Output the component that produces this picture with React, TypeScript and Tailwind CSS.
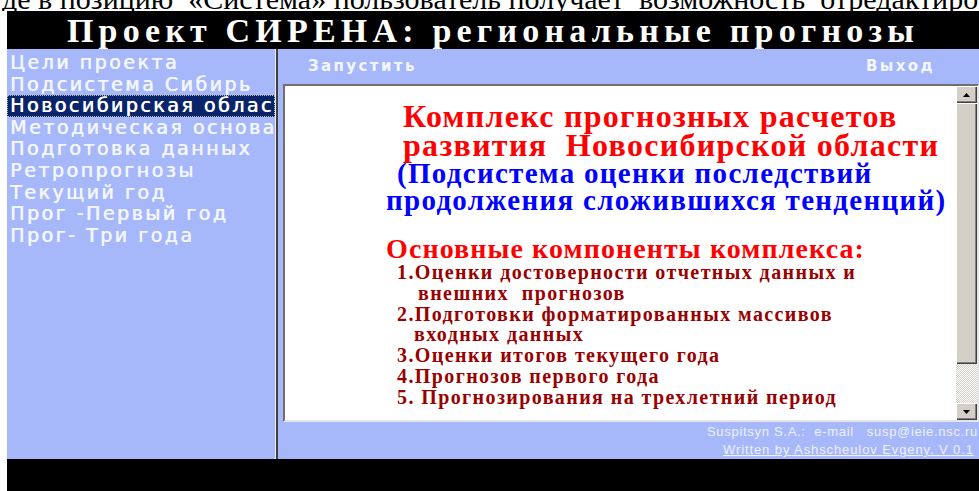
import React from "react";

const serif = "font-['Liberation_Serif','Times_New_Roman',serif]";
const sans = "font-['DejaVu_Sans','Verdana',sans-serif]";

const menuItems = [
  "Цели проекта",
  "Подсистема Сибирь",
  "Новосибирская область",
  "Методическая основа",
  "Подготовка данных",
  "Ретропрогнозы",
  "Текущий год",
  "Прог -Первый год",
  "Прог- Три года",
];

const components = [
  { text: "1.Оценки достоверности отчетных данных и", indent: "ml-[112px]" },
  { text: "внешних  прогнозов", indent: "ml-[133px]" },
  { text: "2.Подготовки форматированных массивов", indent: "ml-[112px]" },
  { text: "входных данных", indent: "ml-[129px]" },
  { text: "3.Оценки итогов текущего года", indent: "ml-[112px]" },
  { text: "4.Прогнозов первого года", indent: "ml-[112px]" },
  { text: "5. Прогнозирования на трехлетний период", indent: "ml-[112px]" },
];

const bevel =
  "bg-[#d4d0c8] shadow-[inset_1px_1px_0_#ffffff,inset_-1px_-1px_0_#404040,inset_-2px_-2px_0_#808080]";

const ScrollButton = ({ up }: { up: boolean }) => (
  <div className={`h-[17px] flex items-center justify-center ${bevel}`}>
    <svg width="7" height="4" viewBox="0 0 7 4">
      {up ? (
        <polygon points="3.5,0 7,4 0,4" fill="#000" />
      ) : (
        <polygon points="0,0 7,0 3.5,4" fill="#000" />
      )}
    </svg>
  </div>
);

const Menu = () => (
  <div className="w-[268px] bg-[#a6b8fa] pt-[3px]">
    {menuItems.map((item, i) => (
      <div
        key={item}
        className={`h-[21.6px] pl-[3px] whitespace-nowrap overflow-hidden text-[19px] leading-[21.6px] tracking-[2.5px] [text-shadow:0.6px_0_0_currentColor] ${sans} ${
          i === 2
            ? "bg-[#0a246a] text-white outline-1 outline-dotted outline-[#c8c0a0] -outline-offset-1"
            : "text-[#f4f6ff]"
        }`}
      >
        {item}
      </div>
    ))}
  </div>
);

const Content = () => (
  <div className={`flex-1 bg-white pt-[16px] overflow-hidden ${serif} font-bold whitespace-pre`}>
    <div className="text-[#ff0000] text-[32px] leading-[29px] tracking-[1.3px]">
      <div className="ml-[118px]">Комплекс прогнозных расчетов</div>
      <div className="ml-[118px]">развития  Новосибирской области</div>
    </div>
    <div className="text-[#0000ff] text-[29px] leading-[27px] tracking-[1.3px]">
      <div className="ml-[112px]">(Подсистема оценки последствий</div>
      <div className="ml-[101px]">продолжения сложившихся тенденций)</div>
    </div>
    <div className="mt-[21px] ml-[101px] text-[#ff0000] text-[28px] leading-[27px] tracking-[1.1px]">
      Основные компоненты комплекса:
    </div>
    <div className="text-[#990000] text-[20px] leading-[20.8px] tracking-[1.4px]">
      {components.map((c) => (
        <div key={c.text} className={c.indent}>
          {c.text}
        </div>
      ))}
    </div>
  </div>
);

const Scrollbar = () => (
  <div className="w-[21px] flex flex-col">
    <ScrollButton up />
    <div className={`h-[261px] ${bevel}`} />
    <div className="flex-1 bg-[repeating-conic-gradient(#d4d0c8_0_25%,#ffffff_0_50%)] bg-[length:2px_2px]" />
    <ScrollButton up={false} />
  </div>
);

export default function App() {
  return (
    <div className="w-[979px] h-[491px] overflow-hidden bg-white">
      <div className="h-[11px] overflow-hidden">
        <p className={`-mt-[16px] ml-[2px] text-[30px] leading-[30px] text-black whitespace-pre ${serif}`}>
          де в позицию  «Система» пользователь получает  возможность  отредактировать
        </p>
      </div>
      <div className="ml-[7px] flex flex-col">
        <div
          className={`h-[38px] bg-black text-white text-center text-[34px] leading-[40px] font-bold tracking-[5.2px] whitespace-nowrap overflow-hidden ${serif}`}
        >
          Проект СИРЕНА: региональные прогнозы
        </div>
        <div className="h-[410px] flex">
          <Menu />
          <div className="w-[3px] border-l border-[#e8ecff] bg-[#404040]" />
          <div className="flex-1 bg-[#a6b8fa] flex flex-col">
            <div
              className={`h-[35px] flex items-center justify-between pl-[30px] pr-[44px] text-[15px] font-bold tracking-[2.4px] text-[#f4f6ff] ${sans}`}
            >
              <span>Запустить</span>
              <span>Выход</span>
            </div>
            <div className="ml-[5px] h-[338px] flex border-2 border-t-[#707070] border-l-[#707070] border-b-[#e4e4e4] border-r-[#e4e4e4]">
              <Content />
              <Scrollbar />
            </div>
            <div className="flex-1 font-['Liberation_Sans',Arial,sans-serif] text-[13px] text-[#eef0ff] whitespace-pre overflow-hidden">
              <div className="pl-[429px] leading-[19px] tracking-[0.7px]">
                Suspitsyn S.A.:  e-mail   susp@ieie.nsc.ru
              </div>
              <div className="pl-[445px] leading-[18px] tracking-[0.9px] underline underline-offset-1">
                Written by Ashscheulov Evgeny. V 0.1
              </div>
            </div>
          </div>
        </div>
        <div className="h-[32px] bg-black" />
      </div>
    </div>
  );
}
